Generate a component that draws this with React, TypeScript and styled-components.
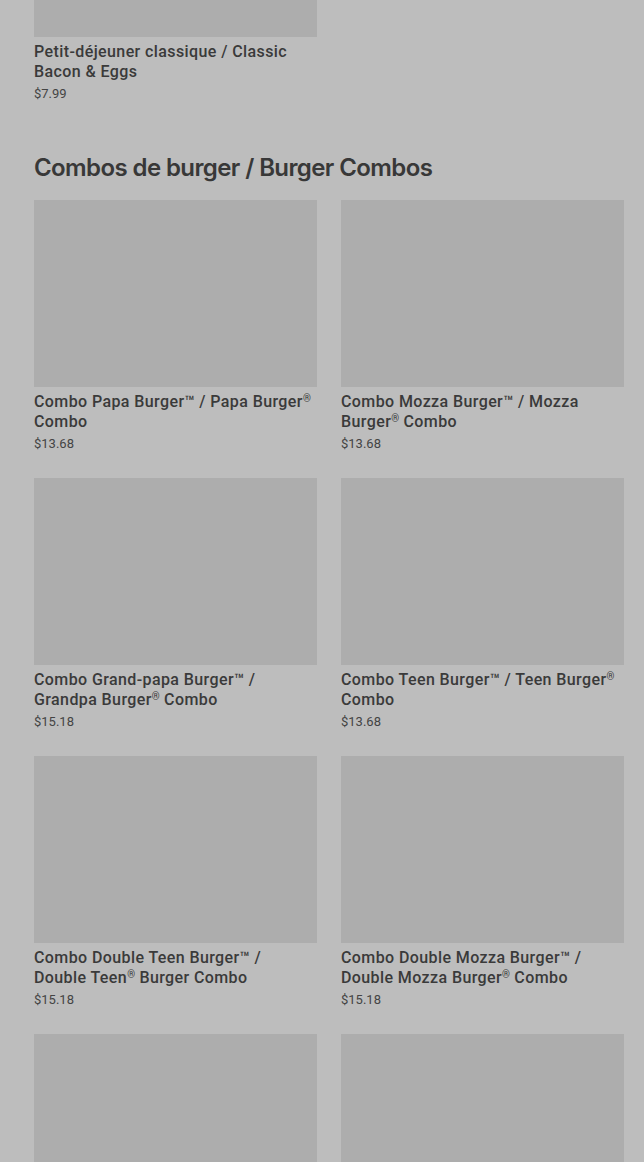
import React from "react";
import styled, { createGlobalStyle } from "styled-components";

const GlobalStyle = createGlobalStyle`
  html, body {
    margin: 0;
    padding: 0;
    background: #bdbdbd;
  }
  body {
    font-family: Roboto, "Liberation Sans", sans-serif;
    color: #383838;
  }
`;

interface Item {
  title: string;
  price: string;
}

const burgerCombos: Item[] = [
  { title: "Combo Papa Burger™ / Papa Burger® Combo", price: "$13.68" },
  { title: "Combo Mozza Burger™ / Mozza Burger® Combo", price: "$13.68" },
  { title: "Combo Grand-papa Burger™ / Grandpa Burger® Combo", price: "$15.18" },
  { title: "Combo Teen Burger™ / Teen Burger® Combo", price: "$13.68" },
  { title: "Combo Double Teen Burger™ / Double Teen® Burger Combo", price: "$15.18" },
  { title: "Combo Double Mozza Burger™ / Double Mozza Burger® Combo", price: "$15.18" },
  { title: "Combo Uncle Burger™ / Uncle Burger® Combo", price: "$14.18" },
  { title: "Combo Chubby Chicken® Burger", price: "$14.18" },
];

// registered marks render small and raised, like the original menu
const withMarks = (text: string) =>
  text.split(/(®)/).map((part, i) => (part === "®" ? <Mark key={i}>®</Mark> : part));

const MenuCard = ({ title, price, cropped }: Item & { cropped?: boolean }) => (
  <Card>
    <Thumb $cropped={cropped} />
    <CardTitle>{withMarks(title)}</CardTitle>
    <Price>{price}</Price>
  </Card>
);

export default function App() {
  return (
    <>
      <GlobalStyle />
      <Page>
        <Grid>
          <MenuCard cropped title="Petit-déjeuner classique / Classic Bacon & Eggs" price="$7.99" />
        </Grid>
        <Section>
          <SectionTitle>Combos de burger / Burger Combos</SectionTitle>
          <Grid>
            {burgerCombos.map(item => (
              <MenuCard key={item.title} {...item} />
            ))}
          </Grid>
        </Section>
      </Page>
    </>
  );
}

const Page = styled.main`
  padding: 0 20px 0 34px;
  height: 1162px;
  overflow: hidden;
`;

const Section = styled.section`
  margin-top: 48px;
`;

const SectionTitle = styled.h2`
  margin: 0 0 16px;
  font-family: Inter, "Open Sans", sans-serif;
  font-size: 24px;
  line-height: 32px;
  font-weight: 600;
  letter-spacing: -0.6px;
  color: #383838;
`;

const Grid = styled.div`
  display: grid;
  grid-template-columns: 1fr 1fr;
  column-gap: 24px;
  row-gap: 24px;
`;

const Card = styled.article`
  display: flex;
  flex-direction: column;
`;

const Thumb = styled.div<{ $cropped?: boolean }>`
  height: ${p => (p.$cropped ? "37px" : "187px")};
  background: #adadad;
`;

const CardTitle = styled.h3`
  margin: 5px 0 0;
  font-size: 16px;
  line-height: 20px;
  font-weight: 500;
  letter-spacing: 0.4px;
  color: #3a3a3a;
`;

const Mark = styled.span`
  font-size: 10px;
  line-height: 0;
  vertical-align: 5px;
  letter-spacing: 0;
`;

const Price = styled.span`
  margin-top: 2px;
  font-size: 13px;
  line-height: 20px;
  color: #444;
`;
